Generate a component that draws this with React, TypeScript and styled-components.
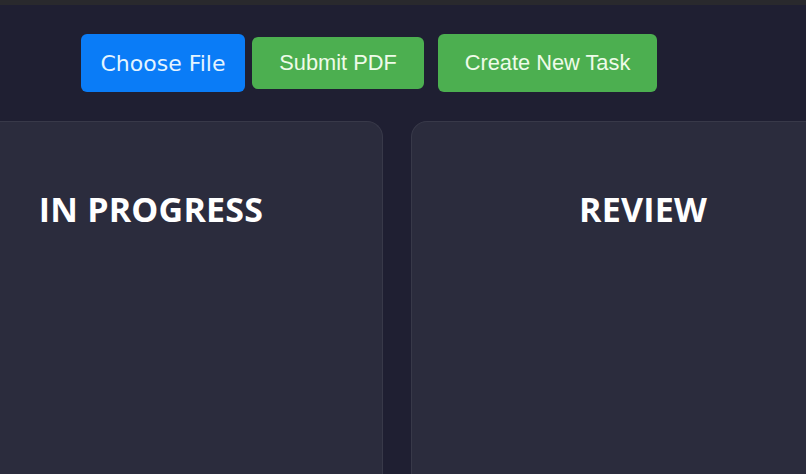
import React from "react";
import styled, { createGlobalStyle } from "styled-components";

const Global = createGlobalStyle`
  html, body { margin: 0; padding: 0; background: #1f1f33; }
  body { overflow: hidden; }
`;

const Page = styled.div`
  width: 806px;
  height: 474px;
  background: #1f1f32;
  display: flex;
  flex-direction: column;
  overflow: hidden;
`;

const TopStrip = styled.div`
  height: 5px;
  background: #29292d;
  flex-shrink: 0;
`;

const Toolbar = styled.div`
  display: flex;
  align-items: center;
  padding-left: 81px;
  height: 116px;
  flex-shrink: 0;
`;

const Button = styled.button<{ $tone: "blue" | "green"; $h: number; $w: number; $gap: number; $font: "poppins" | "arial" }>`
  height: ${(p) => p.$h}px;
  width: ${(p) => p.$w}px;
  margin-right: ${(p) => p.$gap}px;
  border: none;
  border-radius: 6px;
  background: ${(p) => (p.$tone === "blue" ? "#0a7cf7" : "#4caf50")};
  color: ${(p) => (p.$tone === "blue" ? "#e4f4ff" : "#eefbe9")};
  font-family: ${(p) => (p.$font === "poppins" ? '"DejaVu Sans", "Open Sans", sans-serif' : '"Liberation Sans", Arial, sans-serif')};
  font-size: ${(p) => (p.$font === "poppins" ? 22 : 21.8)}px;
  padding: 0;
  display: flex;
  align-items: center;
  justify-content: center;
  cursor: pointer;
`;

const Board = styled.div`
  display: flex;
  gap: 28px;
  margin-left: -81px;
  flex: 1;
`;

const Column = styled.div`
  width: 464px;
  flex-shrink: 0;
  box-sizing: border-box;
  background: #2b2c3d;
  border: 1px solid #383949;
  border-bottom: none;
  border-radius: 16px 16px 0 0;
  display: flex;
  flex-direction: column;
  align-items: center;
`;

const ColumnTitle = styled.h2`
  margin: 67px 0 0;
  font-family: "Open Sans", "Liberation Sans", sans-serif;
  font-weight: 700;
  font-size: 34px;
  line-height: 40px;
  color: #ffffff;
  letter-spacing: 0.2px;
`;

export default function App() {
  return (
    <>
      <Global />
      <Page>
        <TopStrip />
        <Toolbar>
          <Button $tone="blue" $h={58} $w={164} $gap={7} $font="poppins">Choose File</Button>
          <Button $tone="green" $h={52} $w={172} $gap={14} $font="arial">Submit PDF</Button>
          <Button $tone="green" $h={58} $w={219} $gap={0} $font="arial">Create New Task</Button>
        </Toolbar>
        <Board>
          <Column>
            <ColumnTitle>IN PROGRESS</ColumnTitle>
          </Column>
          <Column>
            <ColumnTitle>REVIEW</ColumnTitle>
          </Column>
        </Board>
      </Page>
    </>
  );
}
